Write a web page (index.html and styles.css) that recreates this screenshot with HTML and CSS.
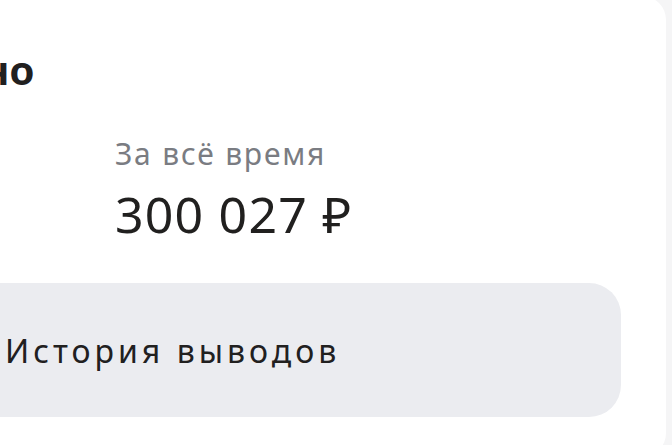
FILE: index.html
```html
<!DOCTYPE html>
<html lang="ru">
<head>
    <meta charset="UTF-8">
    <meta name="viewport" content="width=device-width, initial-scale=1.0">
    <title>Выведено</title>
    <link rel="stylesheet" href="styles.css">
</head>
<body>
    <div class="card">
        <h2 class="card-title">Выведено</h2>
        <div class="stats">
            <div class="stat">
                <p class="stat-label">За всё время</p>
                <p class="stat-value">300 027 ₽</p>
            </div>
        </div>
        <button class="history-button">История выводов</button>
    </div>
</body>
</html>
```

FILE: styles.css
```css
body {
    margin: 0;
    background-color: #f5f5f6;
    font-family: "Noto Sans", sans-serif;
    color: #21201f;
    overflow: hidden;
}
.card {
    background-color: #fff;
    border-radius: 24px;
    margin: -4px 6px 0 -180px;
    padding: 50px 45px 40px 44px;
}
.card-title {
    margin: 0 0 0 -37px;
    font-size: 40px;
    line-height: 48px;
    font-weight: 700;
}
.stats {
    display: flex;
    margin-top: 42px;
    padding-left: 251px;
}
.stat-label {
    margin: 0;
    font-size: 30px;
    line-height: 36px;
    letter-spacing: 1.8px;
    color: #7a7c82;
}
.stat-value {
    margin: 12px 0 0;
    font-size: 50px;
    line-height: 60px;
    letter-spacing: 1.2px;
}
.history-button {
    display: flex;
    align-items: center;
    width: 100%;
    height: 134px;
    margin-top: 39px;
    padding: 0 0 0 141px;
    border: none;
    border-radius: 32px;
    background-color: #ebecf0;
    color: #21201f;
    font-family: inherit;
    font-size: 32px;
    letter-spacing: 4px;
    text-align: left;
    cursor: pointer;
}
```
